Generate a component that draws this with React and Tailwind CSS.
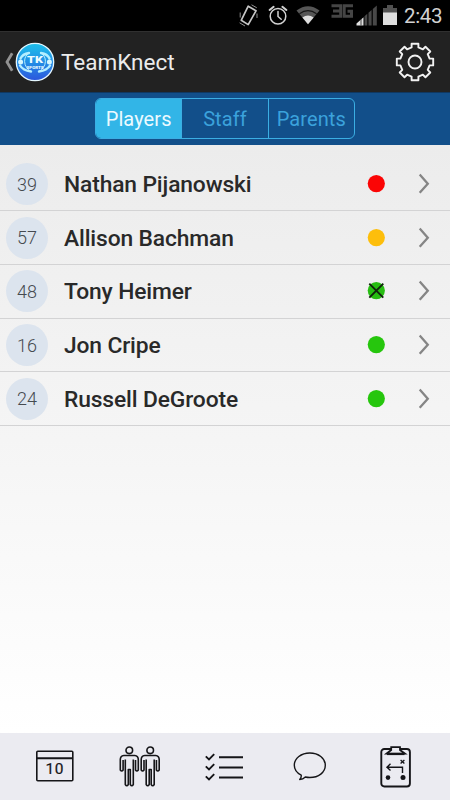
import React, { useState } from 'react';

const players = [
    { number: 39, name: 'Nathan Pijanowski', color: '#fb0505' },
    { number: 57, name: 'Allison Bachman', color: '#fdbe0b' },
    { number: 48, name: 'Tony Heimer', color: '#27bd12', out: true },
    { number: 16, name: 'Jon Cripe', color: '#26c60d' },
    { number: 24, name: 'Russell DeGroote', color: '#26c60d' },
];

const tabs = ['Players', 'Staff', 'Parents'];

// eight teeth around the rim, four points per tooth
const gearPath = () => {
    const points = [];
    for (let i = 0; i < 8; i++) {
        const angle = (i * Math.PI) / 4;
        [[-3.4, -14.6], [-3.4, -18.2], [3.4, -18.2], [3.4, -14.6]].forEach(([x, y]) => {
            const px = x * Math.cos(angle) - y * Math.sin(angle);
            const py = x * Math.sin(angle) + y * Math.cos(angle);
            points.push(`${px.toFixed(2)} ${py.toFixed(2)}`);
        });
    }
    return `M${points.join('L')}Z`;
};

const StatusBar = () => (
    <div className="h-[31px] shrink-0 bg-black flex items-center justify-end pr-2">
        <svg width="162" height="31" viewBox="236 0 162 31" className="mr-[6px]" fill="none">
            <g stroke="#c6c6c6" strokeWidth="1.7" strokeLinejoin="round">
                <path d="M248.2 6.2L256 10.8 248.2 24.6 241.2 20.3Z" />
                <path d="M240.2 12.5V17.5M257 13.5V18M251.5 4.8L256.8 7.8M239.6 22.8L245 26" strokeWidth="1" stroke="#8f8f8f" />
            </g>
            <g stroke="#d2d2d2" strokeWidth="1.5" strokeLinecap="round">
                <circle cx="278" cy="16.3" r="7.8" />
                <path d="M278 11.5V16.5L281.2 19.3" />
                <path d="M269.6 10L273.6 6.8M282.4 6.8L286.4 10" strokeWidth="2" />
            </g>
            <path d="M296.5 10.6Q308 2 319.5 10.6L308 24.2Z" fill="#565656" />
            <path d="M299.4 13.8Q308 7.4 316.6 13.8" stroke="#161616" strokeWidth="1.2" />
            <path d="M302.4 17.4Q308 13.4 313.6 17.4L308 24.2Z" fill="#dedede" />
            <g stroke="#454545" strokeWidth="3">
                <path d="M331.5 5.8H340.7V16.2H331.5M333 11H340.7" />
                <path d="M353 5.8H344.2V16.2H351.5V11.2H347.5" />
            </g>
            <path d="M356.5 25.5V23.4L363.5 17.3V25.5Z" fill="#e0e0e0" />
            <path d="M361 19V25.5" stroke="#222" strokeWidth=".8" />
            <path d="M364.5 25.5V16.3L367.3 13.8V25.5ZM368.5 25.5V12.8L371.6 10V25.5ZM372.8 25.5V9L376.8 5.5V25.5Z" fill="#484848" />
            <path d="M383 8H387V5H393V8H397V13H383Z" fill="#515151" />
            <path d="M383 12.5H397V25H383Z" fill="#dedede" />
        </svg>
        <span className="mt-px w-[38px] text-[20.5px] leading-[31px] text-[#d2d2d2] whitespace-nowrap tracking-[-0.35px]">2:43</span>
    </div>
);

const Logo = () => (
    <svg width="40" height="40" viewBox="0 0 40 40">
        <defs>
            <linearGradient id="logoFill" x1="0" y1="0" x2="0" y2="1">
                <stop offset="0" stopColor="#1dc0ea" />
                <stop offset="0.5" stopColor="#238fe6" />
                <stop offset="1" stopColor="#2c55dc" />
            </linearGradient>
        </defs>
        <circle cx="20" cy="20" r="18.7" fill="url(#logoFill)" stroke="#e4f7ff" strokeWidth="1.3" />
        <g fill="none" stroke="#b5efff" strokeWidth="2.4" strokeLinecap="round">
            <path d="M14 11Q7.5 12 5.5 16.5M26 11Q32.5 12 34.5 16.5" />
            <path d="M5 23.5Q8 28.5 16 29.5M35 23.5Q32 28.5 24 29.5" />
        </g>
        <g fill="none" stroke="#b5efff" strokeWidth="1">
            <path d="M14 11Q9.5 14 9.6 19.5Q10 26 16 29.5M26 11Q30.5 14 30.4 19.5Q30 26 24 29.5" />
        </g>
        <g fill="#d5f6ff">
            <circle cx="5.6" cy="20" r="2.5" />
            <circle cx="34.4" cy="20" r="2.5" />
        </g>
        <text x="20" y="20.6" textAnchor="middle" textLength="16" lengthAdjust="spacingAndGlyphs" fontSize="9.2" fontWeight="900" fill="#effcff">TK</text>
        <text x="20" y="27" textAnchor="middle" textLength="17" lengthAdjust="spacingAndGlyphs" fontSize="4.3" fontWeight="900" fill="#e6faff">SPORTS</text>
    </svg>
);

const Header = () => (
    <div className="h-[61px] shrink-0 bg-[#222222] border-t border-[#303030] flex items-center pl-1 pr-[14px]">
        <svg width="11" height="20" viewBox="0 0 11 20" fill="none">
            <path d="M8.2 1.2L3 10L8.2 18.8" stroke="#929292" strokeWidth="2.8" />
        </svg>
        <Logo />
        <h1 className="ml-[6px] text-[22.5px] leading-[30px] text-[#ececec] tracking-normal">TeamKnect</h1>
        <svg width="42" height="42" viewBox="-21 -21 42 42" className="ml-auto" fill="none" stroke="#f2f2f2" strokeWidth="1.9" strokeLinejoin="round">
            <path d={gearPath()} />
            <circle r="6.5" />
        </svg>
    </div>
);

const Person = ({ x }) => (
    <g transform={`translate(${x} 0)`} fill="none" stroke="#151518" strokeWidth="1.6" strokeLinejoin="round">
        <circle cx="10" cy="4.3" r="3.3" />
        <path d="M4.5 9.5H15.5Q19 9.9 19 13.5V24Q17.6 26 16.2 24V14M4.5 9.5Q1 9.9 1 13.5V24Q2.4 26 3.8 24V14" />
        <path d="M6 13.5V38.5Q7.5 41 9 38.5V23.5H11V38.5Q12.5 41 14 38.5V13.5" />
    </g>
);

const BottomNav = () => (
    <div className="h-[67px] shrink-0 bg-[#ebebf1] grid grid-cols-5 px-3 items-center justify-items-center">
        <svg width="40" height="34" viewBox="0 0 40 34" fill="none" stroke="#151518">
            <rect x="1.8" y="1.3" width="36" height="29.5" rx="1" strokeWidth="1.6" />
            <path d="M2 8.3H38" strokeWidth="2" />
            <text x="19.5" y="24.4" textAnchor="middle" fontSize="15.5" fontWeight="400" fill="#151518" stroke="#151518" strokeWidth=".2" textLength="18">10</text>
        </svg>
        <svg width="42" height="42" viewBox="0 0 42 42">
            <Person x={0.3} />
            <Person x={21.2} />
        </svg>
        <svg width="40" height="28" viewBox="0 0 40 28" fill="none" stroke="#151518" strokeWidth="2">
            <path d="M.8 3.4L4 6.4L9.2 1.2M.8 13.4L4 16.4L9.2 11.2M.8 23.4L4 26.4L9.2 21.2" strokeWidth="1.9" />
            <path d="M14 4.2H38M14 14.4H38M14 24.6H38" />
        </svg>
        <svg width="34" height="30" viewBox="0 0 34 30" fill="none" stroke="#151518" strokeWidth="1.4" strokeLinejoin="round">
            <path d="M8.2 23.2C4 21 1.3 17.8 1.3 13.3C1.3 6.3 8.2 1 16.8 1C25.5 1 32.3 6.3 32.3 13.3C32.3 20.5 25.5 25.5 16.8 25.5Q14.5 25.5 12.3 25Q10 27.3 6.7 27.5Q8.6 25.7 8.2 23.2Z" />
        </svg>
        <svg width="34" height="44" viewBox="0 0 34 44" className="ml-[2px]" fill="none" stroke="#151518" strokeWidth="1.9">
            <rect x="2.3" y="4" width="28.6" height="37.5" rx="3" />
            <path d="M12.2 2.2H21V5L26 8.7H7.5L12.2 5Z" fill="#ebebf1" strokeWidth="1.8" />
            <path d="M8 9H25.5" strokeWidth="2.2" />
            <path d="M23.5 28V22.2H7.5M11.5 18.8L8 22.2L11.5 25.6" strokeWidth="1.4" />
            <path d="M21.6 15L25.4 18.5M25.4 15L21.6 18.5" strokeWidth="1.3" />
            <circle cx="9" cy="32.6" r="2.3" fill="#151518" stroke="none" />
            <circle cx="24" cy="32.6" r="2.5" fill="#151518" stroke="none" />
        </svg>
    </div>
);

const PlayerRow = ({ player }) => (
    <li className="h-[53.7px] border-b border-[#d3d3d4] flex items-center pl-[6px] pr-[18px]">
        <span className="size-[42px] rounded-full bg-[#dce4ee] flex items-center justify-center text-[18px] font-light text-[#454a50]">
            {player.number}
        </span>
        <span className="ml-4 mt-[2px] text-[22.8px] tracking-[-0.13px] font-medium text-[#292929] whitespace-nowrap">{player.name}</span>
        <svg width="20" height="20" viewBox="-10 -10 20 20" className="ml-auto">
            <circle cx="0.3" cy="-0.4" r="8.6" fill={player.color} />
            {player.out && <path d="M-6.7 -7.4L7.3 6.6M7.3 -7.4L-6.7 6.6" stroke="#10240c" strokeWidth="1.9" />}
        </svg>
        <svg width="14" height="22" viewBox="0 0 14 22" className="ml-[32px]" fill="none">
            <path d="M1.7 1.6L9.8 10.7L1.7 19.8" stroke="#858585" strokeWidth="2.3" />
        </svg>
    </li>
);

const App = () => {
    const [active, setActive] = useState('Players');

    return (
        <div className="w-[450px] h-[800px] flex flex-col overflow-hidden font-[Roboto,'Liberation_Sans',sans-serif]">
            <StatusBar />
            <Header />
            <div className="h-[53px] shrink-0 bg-[#124f8a] border-t border-[#103861] flex justify-center">
                <div className="mt-[5px] w-[260px] h-[41px] flex rounded-[6px] border border-[#3baee3] overflow-hidden">
                    {tabs.map((tab) => (
                        <button
                            key={tab}
                            onClick={() => setActive(tab)}
                            className={`flex-1 text-[20px] tracking-[0.1px] border-l first:border-l-0 border-[#3baee3] ${active === tab ? 'bg-[#32b5e7] text-[#ecfaff]' : 'text-[#3ba2dc]'}`}
                        >
                            {tab}
                        </button>
                    ))}
                </div>
            </div>
            <div className="flex-1 pt-[12.7px] bg-linear-to-b from-[#ececec] via-[#f5f5f5] to-[#ffffff]">
                <ul>
                    {players.map((player) => (
                        <PlayerRow key={player.number} player={player} />
                    ))}
                </ul>
            </div>
            <BottomNav />
        </div>
    );
};

export default App;
